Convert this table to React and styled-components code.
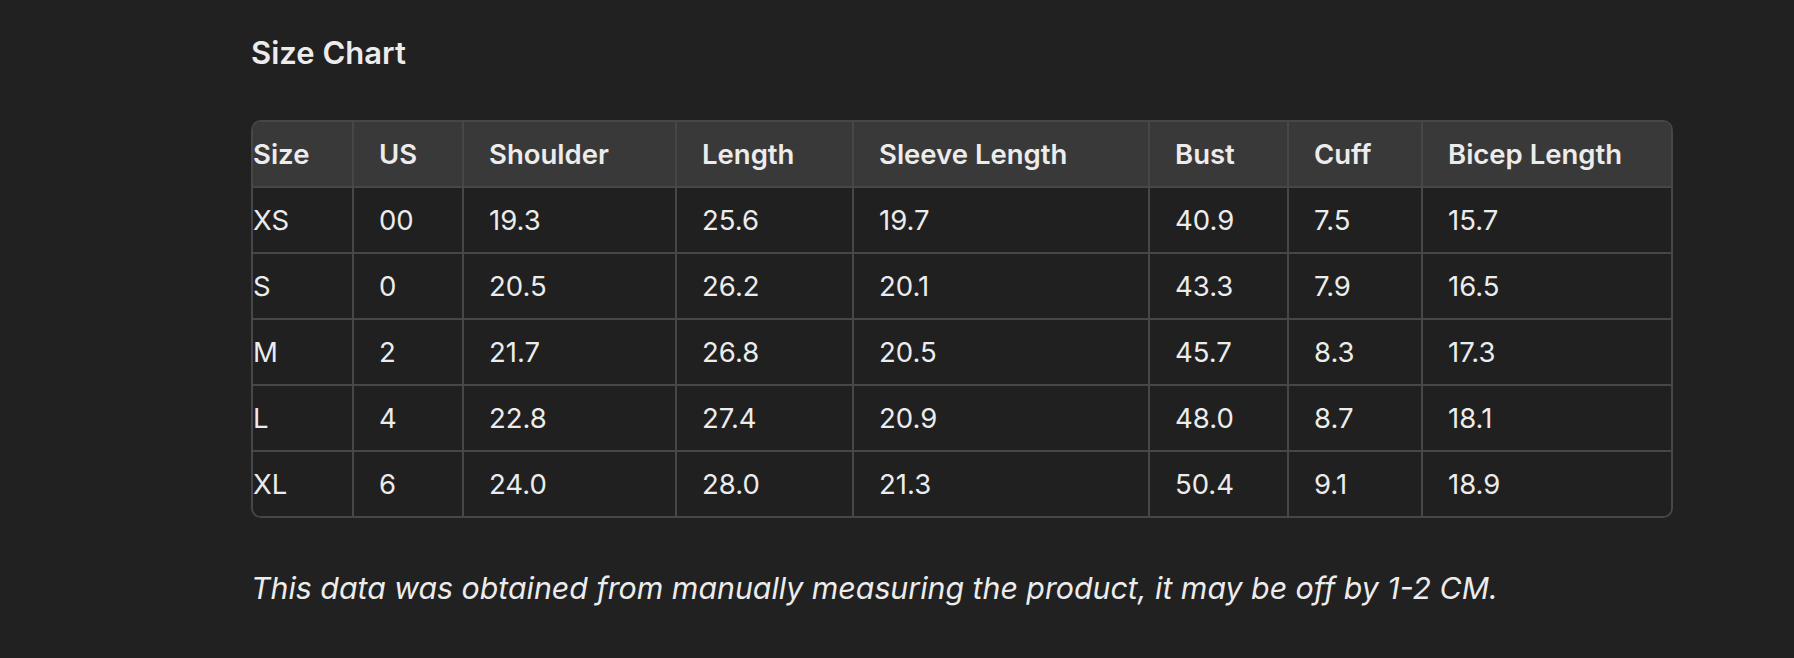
import React from 'react';
import styled, { createGlobalStyle } from 'styled-components';

const GlobalStyle = createGlobalStyle`
  html, body {
    margin: 0;
    padding: 0;
    background: #212121;
  }
  body {
    font-family: Inter, "Noto Sans", sans-serif;
    color: #ececec;
  }
`;

const Page = styled.div`
  width: 1794px;
  height: 658px;
  box-sizing: border-box;
  padding: 33px 122px 0 251px;
  display: flex;
  flex-direction: column;
`;

const Title = styled.h3`
  margin: 0;
  font-size: 31px;
  font-weight: 600;
  line-height: 40px;
  color: #ececec;
`;

const TableWrap = styled.div`
  margin-top: 47px;
  width: 1422px;
  border: 2px solid #474747;
  border-radius: 10px;
  overflow: hidden;
  box-sizing: border-box;
`;

const Table = styled.table`
  width: 100%;
  table-layout: fixed;
  border-collapse: collapse;
  font-size: 27.5px;
`;

const Col = styled.col`
  width: ${(p) => p.$w}px;
`;

const HeadRow = styled.tr`
  background: #3a3939;
`;

const Row = styled.tr`
  background: #202020;
`;

const Th = styled.th`
  height: 64px;
  padding: 0 0 0 25px;
  text-align: left;
  font-weight: 600;
  color: #ececec;
  border-right: 2px solid #474747;
  border-bottom: 2px solid #474747;

  &:first-child {
    padding-left: 0;
  }
  &:last-child {
    border-right: none;
  }
`;

const Td = styled.td`
  height: 64px;
  padding: 0 0 0 25px;
  font-weight: 400;
  color: #ececec;
  border-right: 2px solid #474747;
  border-bottom: 2px solid #474747;

  &:first-child {
    padding-left: 0;
  }
  &:last-child {
    border-right: none;
  }
  tr:last-child > & {
    border-bottom: none;
  }
`;

const Note = styled.p`
  margin: 50px 0 0;
  font-size: 30.3px;
  font-style: italic;
  line-height: 40px;
  color: #ececec;
`;

const columns = [
  { name: 'Size', w: 100 },
  { name: 'US', w: 110 },
  { name: 'Shoulder', w: 213 },
  { name: 'Length', w: 177 },
  { name: 'Sleeve Length', w: 296 },
  { name: 'Bust', w: 139 },
  { name: 'Cuff', w: 134 },
  { name: 'Bicep Length', w: 253 },
];

const rows = [
  ['XS', '00', '19.3', '25.6', '19.7', '40.9', '7.5', '15.7'],
  ['S', '0', '20.5', '26.2', '20.1', '43.3', '7.9', '16.5'],
  ['M', '2', '21.7', '26.8', '20.5', '45.7', '8.3', '17.3'],
  ['L', '4', '22.8', '27.4', '20.9', '48.0', '8.7', '18.1'],
  ['XL', '6', '24.0', '28.0', '21.3', '50.4', '9.1', '18.9'],
];

const App = () => (
  <>
    <GlobalStyle />
    <Page>
      <Title>Size Chart</Title>
      <TableWrap>
        <Table>
          <colgroup>
            {columns.map((c) => (
              <Col key={c.name} $w={c.w} />
            ))}
          </colgroup>
          <thead>
            <HeadRow>
              {columns.map((c) => (
                <Th key={c.name}>{c.name}</Th>
              ))}
            </HeadRow>
          </thead>
          <tbody>
            {rows.map((r) => (
              <Row key={r[0]}>
                {r.map((v, i) => (
                  <Td key={i}>{v}</Td>
                ))}
              </Row>
            ))}
          </tbody>
        </Table>
      </TableWrap>
      <Note>This data was obtained from manually measuring the product, it may be off by 1-2 CM.</Note>
    </Page>
  </>
);

export default App;
